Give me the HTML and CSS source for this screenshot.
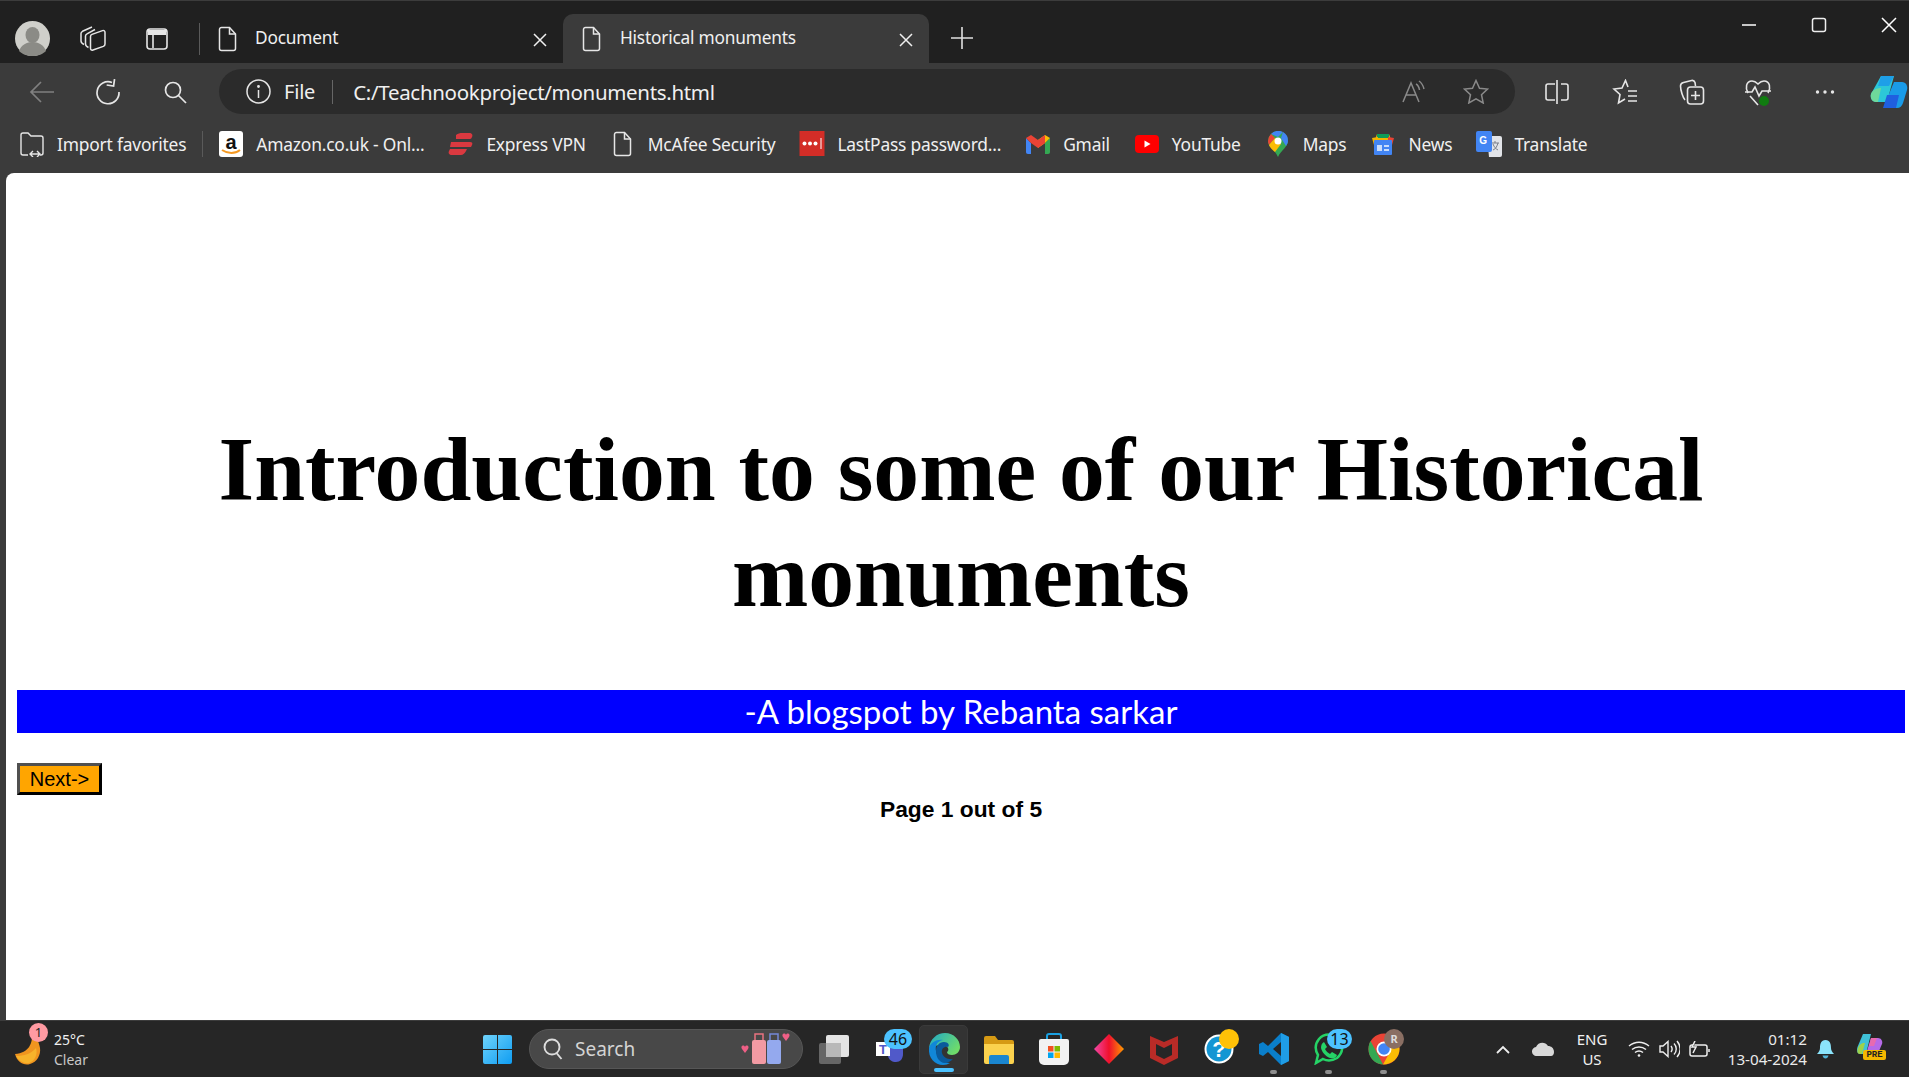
FILE: index.html
```html
<!DOCTYPE html>
<html lang="en">
<head>
  <meta charset="UTF-8" />
  <title>Historical monuments</title>
  <link rel="stylesheet" href="styles.css">
</head>
<body>
  <div class="titlebar">
    <svg class="avatar" width="35" height="35" viewBox="0 0 35 35"><circle cx="17.5" cy="17.5" r="17.5" fill="#cfcfca"/><ellipse cx="17.5" cy="14" rx="7" ry="8" fill="#8b8b86"/><path d="M4 30c2-6 8-9 13.500-9S29 24 31 30c-3 3-8 5-13.500 5S7 33 4 30z" fill="#8b8b86"/></svg>
    <svg class="ic ic-collections" width="26" height="26" viewBox="0 0 26 26" fill="none" stroke="#e6e6e6" stroke-width="1.500"><path d="M4 18.500C2 17.500 1 16.500 1 15V7.500c0-1 .5-1.700 1.500-2.200L12 1"/><path d="M8.500 21.500C6.500 20.500 5.500 19.500 5.500 18V10c0-1 .5-1.700 1.500-2.200L15 3.500"/><path d="M10.500 10.500c0-1 .5-1.700 1.500-2.100l10.500-3.800c1.500-.5 2.500.3 2.500 1.800v11.500c0 1.200-.5 2-1.700 2.500L13 24c-1.500.5-2.500-.3-2.500-1.800z"/></svg>
    <svg class="ic ic-vtabs" width="24" height="24" viewBox="0 0 24 24" fill="none" stroke="#e6e6e6" stroke-width="1.600"><rect x="2" y="2" width="20" height="20" rx="3"/><path d="M3 5.500h18" stroke-width="5"/><path d="M8 7v14"/></svg>
    <span class="tb-sep"></span>
    <div class="tab">
      <svg class="doc" width="20" height="26" viewBox="0 0 20 26" fill="none" stroke="#e6e6e6" stroke-width="1.500"><path d="M3.500 1.500h8l6 6.500v14.500a2 2 0 0 1-2 2h-12a2 2 0 0 1-2-2v-19a2 2 0 0 1 2-2z"/><path d="M11.500 1.500V8h6"/></svg>
      <span class="tab-title">Document</span>
      <svg class="tab-x" width="14" height="14" viewBox="0 0 14 14" stroke="#f0f0f0" stroke-width="1.500"><path d="M1 1l12 12M13 1L1 13"/></svg>
    </div>
    <div class="tab tab-active">
      <svg class="doc" width="20" height="26" viewBox="0 0 20 26" fill="none" stroke="#e6e6e6" stroke-width="1.500"><path d="M3.500 1.500h8l6 6.500v14.500a2 2 0 0 1-2 2h-12a2 2 0 0 1-2-2v-19a2 2 0 0 1 2-2z"/><path d="M11.500 1.500V8h6"/></svg>
      <span class="tab-title">Historical monuments</span>
      <svg class="tab-x" width="14" height="14" viewBox="0 0 14 14" stroke="#f0f0f0" stroke-width="1.500"><path d="M1 1l12 12M13 1L1 13"/></svg>
    </div>
    <svg class="tab-plus" width="22" height="22" viewBox="0 0 22 22" stroke="#e0e0e0" stroke-width="1.600"><path d="M11 0v22M0 11h22"/></svg>
    <div class="win-controls">
      <svg width="16" height="16" viewBox="0 0 16 16" stroke="#fff" stroke-width="1.500"><path d="M1 8h14"/></svg>
      <svg width="16" height="16" viewBox="0 0 16 16" fill="none" stroke="#eee" stroke-width="1.500"><rect x="1.500" y="1.500" width="13" height="13" rx="2"/></svg>
      <svg width="16" height="16" viewBox="0 0 16 16" stroke="#fff" stroke-width="1.500"><path d="M1 1l14 14M15 1L1 15"/></svg>
    </div>
  </div>

  <div class="toolbar">
    <svg class="ic-back" width="26" height="24" viewBox="0 0 26 24" fill="none" stroke="#808080" stroke-width="1.700"><path d="M25 12H2M12 2L2 12l10 10"/></svg>
    <svg class="ic-reload" width="26" height="26" viewBox="0 0 26 26" fill="none" stroke="#e6e6e6" stroke-width="1.700"><path d="M17 3.500A11 11 0 1 0 24 13"/><path d="M19 0v7h-7" transform="rotate(8 19 4)"/></svg>
    <svg class="ic-search" width="24" height="24" viewBox="0 0 24 24" fill="none" stroke="#e6e6e6" stroke-width="1.700"><circle cx="10" cy="10" r="7.500"/><path d="M15.500 15.500L23 23"/></svg>
    <div class="address">
      <svg class="ic-info" width="25" height="25" viewBox="0 0 25 25" fill="none" stroke="#e6e6e6" stroke-width="1.500"><circle cx="12.500" cy="12.500" r="11.500"/><path d="M12.500 11v8"/><circle cx="12.500" cy="7.500" r=".7"/></svg>
      <span class="addr-file">File</span>
      <span class="addr-sep"></span>
      <span class="addr-url">C:/Teachnookproject/monuments.html</span>
      <svg class="ic-read" width="26" height="24" viewBox="0 0 26 24" fill="none" stroke="#8a8a8a" stroke-width="1.500"><path d="M1 22L9 3l8 19M4 15h10"/><path d="M14 4c2 1 3 3 3.500 6M17 1c3 2 4 4 5 8"/></svg>
      <svg class="ic-star" width="26" height="25" viewBox="0 0 26 25" fill="none" stroke="#8a8a8a" stroke-width="1.500"><path d="M13 1.500l3.500 7.700 8 .9-6 5.600 1.700 8.300L13 19.800 5.800 24l1.700-8.300-6-5.600 8-.9z"/></svg>
    </div>
    <svg class="ic-split" width="24" height="26" viewBox="0 0 24 26" fill="none" stroke="#e6e6e6" stroke-width="1.600"><path d="M10 5H3a2 2 0 0 0-2 2v12a2 2 0 0 0 2 2h7M16 5h5a2 2 0 0 1 2 2v12a2 2 0 0 1-2 2h-5M12 1v24"/></svg>
    <svg class="ic-fav" width="26" height="26" viewBox="0 0 26 26" fill="none" stroke="#e6e6e6" stroke-width="1.600"><path d="M16 8l-2.500-6.500L10 9l-8 1 6 5.500L6.500 24l6.500-4"/><path d="M16 12h9M16 17h9M16 22h9"/></svg>
    <svg class="ic-coll" width="26" height="28" viewBox="0 0 26 28" fill="none" stroke="#e6e6e6" stroke-width="1.600"><path d="M6 22C4 20 1.500 12 1.500 8c0-2 1-3 3-3.500l8-2c1.500-.3 3 .5 3.500 2L16.500 8"/><rect x="8.500" y="9" width="16" height="17" rx="3"/><path d="M16.500 13v9M12 17.500h9"/></svg>
    <svg class="ic-health" width="28" height="28" viewBox="0 0 28 28" fill="none"><path d="M4 15C1 10 2 3 8 3c3 0 5 2 6 3 1-1 3-3 6-3 6 0 7 7 4 12" stroke="#e6e6e6" stroke-width="1.600"/><path d="M1 14h7l3-5 4 9 3-5h9M6 18l8 9" stroke="#e6e6e6" stroke-width="1.600"/><circle cx="20" cy="23" r="5" fill="#107c10"/></svg>
    <svg class="ic-more" width="20" height="6" viewBox="0 0 20 6" fill="#e6e6e6"><circle cx="2.500" cy="3" r="1.700"/><circle cx="10" cy="3" r="1.700"/><circle cx="17.500" cy="3" r="1.700"/></svg>
    <svg class="ic-copilot" width="38" height="34" viewBox="0 0 38 34"><path d="M11 1h13l-7 26H6C2 27 0 23 1 19z" fill="#2cc7d8"/><path d="M11 1h13l-5 10H8z" fill="#1e9fe8"/><path d="M1 19c1-4 6-6 10-6l-3 14H6c-4 0-6-4-5-8z" fill="#6fd89a"/><path d="M24 7h8c4 0 6 4 5 8l-4 13c-1 3-3 5-6 5H14l5-14z" fill="#1a9be8"/><path d="M17 20h12l-3 13H13z" fill="#1f5fe0"/></svg>
  </div>

  <div class="bookmarks">
    <div class="bm bm-import">
      <svg class="bm-ic" width="26" height="26" viewBox="0 0 26 26" fill="none" stroke="#e6e6e6" stroke-width="1.400"><path d="M9 24H4a2 2 0 0 1-2-2V4a2 2 0 0 1 2-2h5l3 3h10a2 2 0 0 1 2 2v15a2 2 0 0 1-2 2h-1"/><path d="M11 23h10M14 20l-3 3 3 3M18 20l3 3-3 3"/></svg>
      <span>Import favorites</span>
    </div>
    <span class="bm-sep"></span>
    <div class="bm">
      <svg class="bm-ic" width="24" height="26" viewBox="0 0 24 26"><rect width="24" height="26" rx="3" fill="#fff"/><text class="amz" x="12" y="18" text-anchor="middle">a</text><path d="M3 19c6 4 13 4 18 0" fill="none" stroke="#f59a23" stroke-width="2"/></svg>
      <span>Amazon.co.uk - Onl...</span>
    </div>
    <div class="bm">
      <svg class="bm-ic" width="24" height="22" viewBox="0 0 24 22" fill="#da3940"><path d="M7 2C9 .5 11 0 13 0h7c3 0 4 2 3 4-.5 1-1 2-2 2H7z"/><path d="M2 9h19c2 0 3 1 2 3l-1 2H1z"/><path d="M1 16h17l-1 2c-1 2-3 4-5 4H3c-3 0-4-2-3-4z"/></svg>
      <span>Express VPN</span>
    </div>
    <div class="bm">
      <svg class="bm-ic" width="20" height="26" viewBox="0 0 20 26" fill="none" stroke="#e6e6e6" stroke-width="1.500"><path d="M3.500 1.500h8l6 6.500v14.500a2 2 0 0 1-2 2h-12a2 2 0 0 1-2-2v-19a2 2 0 0 1 2-2z"/><path d="M11.500 1.500V8h6"/></svg>
      <span>McAfee Security</span>
    </div>
    <div class="bm">
      <svg class="bm-ic" width="25" height="25" viewBox="0 0 25 25"><rect width="25" height="25" fill="#d32d27"/><g fill="#fff"><circle cx="5" cy="12.500" r="2"/><circle cx="10.500" cy="12.500" r="2"/><circle cx="16" cy="12.500" r="2"/><rect x="21" y="7" width="1" height="11"/></g></svg>
      <span>LastPass password...</span>
    </div>
    <div class="bm">
      <svg class="bm-ic" width="24" height="20" viewBox="0 0 24 20"><path d="M0 4v14c0 1 .6 2 2 2h3V9z" fill="#4285f4"/><path d="M24 4v14c0 1-.6 2-2 2h-3V9z" fill="#34a853"/><path d="M19 1l5 3-5 5-7 5V6z" fill="#fbbc04"/><path d="M0 4l5-3 7 5v8L5 9z" fill="#ea4335"/><path d="M12 6l7-5v8l-7 5z" fill="#ea4335"/></svg>
      <span>Gmail</span>
    </div>
    <div class="bm">
      <svg class="bm-ic" width="24" height="18" viewBox="0 0 24 18"><rect width="24" height="18" rx="4" fill="#f00"/><path d="M9.500 5.500v7l6-3.500z" fill="#fff"/></svg>
      <span>YouTube</span>
    </div>
    <div class="bm">
      <svg class="bm-ic" width="20" height="26" viewBox="0 0 20 26"><path d="M10 0a10 10 0 0 1 10 10c0 6-7 9-10 16-3-7-10-10-10-16A10 10 0 0 1 10 0z" fill="#34a853"/><path d="M3 3a10 10 0 0 1 12-2L10 6z" fill="#4285f4"/><path d="M0 10a10 10 0 0 1 3-7l4 4-6 7a10 10 0 0 1-1-4z" fill="#ea4335"/><path d="M15 1a10 10 0 0 1 5 9c0 2-1 3-2 5l-5-8z" fill="#4285f4"/><path d="M1 14l6-7 6 6-6 8C5 19 2 17 1 14z" fill="#fbbc04"/><circle cx="10" cy="10" r="3.500" fill="#fff"/></svg>
      <span>Maps</span>
    </div>
    <div class="bm">
      <svg class="bm-ic" width="24" height="24" viewBox="0 0 24 24"><path d="M6 2h12l2 6H4z" fill="#f4b400"/><path d="M6 2h12v4H6z" fill="#0f9d58"/><path d="M1 6l6-1v8H3z" fill="#f4b400"/><path d="M23 6l-6-1v8h4z" fill="#ea4335"/><rect x="3" y="8" width="18" height="15" rx="1" fill="#4285f4"/><path d="M6 13h5v6H6zM13 13h5v2h-5zM13 17h5v2h-5z" fill="#c9ddfb"/></svg>
      <span>News</span>
    </div>
    <div class="bm">
      <svg class="bm-ic" width="26" height="26" viewBox="0 0 26 26"><path d="M11 5h13a2 2 0 0 1 2 2v17a2 2 0 0 1-2 2H13z" fill="#e2e4e8"/><rect width="16" height="21" rx="2" fill="#4285f4"/><text class="tr-g" x="7" y="13" text-anchor="middle">G</text><path d="M16 12h7M19 10v2M17 19c3-1 4-4 5-7M17 13c1 3 3 5 5 6" stroke="#7a7f88" fill="none"/></svg>
      <span>Translate</span>
    </div>
  </div>

  <div class="page">
    <h1 class="intro-title">Introduction to some of our Historical monuments</h1>
    <h2 class="blog-tag">-A blogspot by Rebanta sarkar</h2>
    <button class="next-btn">Next-&gt;</button>
    <p class="page-count">Page 1 out of 5</p>
  </div>

  <div class="taskbar">
    <div class="weather">
      <svg class="moon" width="30" height="40" viewBox="0 0 30 40"><path d="M18 4c1 10-3 20-17 21 2 8 9 12 15 10 7-2 11-9 10-16-1-6-4-12-8-15z" fill="#f0951f"/><path d="M2 27c8 0 15-2 20-8 2 6-1 13-7 15-5 1-10-2-13-7z" fill="#f7b32b"/></svg>
      <span class="weather-badge">1</span>
      <div class="weather-text"><span>25°C</span><span>Clear</span></div>
    </div>
    <svg class="winlogo" width="29" height="29" viewBox="0 0 29 29"><defs><linearGradient id="wg" x1="0" y1="0" x2="1" y2="1"><stop offset="0" stop-color="#6fd3fb"/><stop offset="1" stop-color="#0f9df2"/></linearGradient></defs><path d="M0 2a2 2 0 0 1 2-2h12v14H0zM15 0h12a2 2 0 0 1 2 2v12H15zM0 15h14v14H2a2 2 0 0 1-2-2zM15 15h14v12a2 2 0 0 1-2 2H15z" fill="url(#wg)"/></svg>
    <div class="searchbox">
      <svg width="20" height="22" viewBox="0 0 20 22" fill="none" stroke="#ddd" stroke-width="1.900"><circle cx="9" cy="9" r="7.500"/><path d="M13.500 15l5 6"/></svg>
      <span class="search-label">Search</span>
      <svg class="luggage" width="52" height="36" viewBox="0 0 52 36"><path d="M2 18c-2-3 2-5 3-2 1-3 5-1 3 2l-3 4z" fill="#ef5f86"/><rect x="12" y="9" width="14" height="24" rx="2" fill="#f29aa3"/><path d="M15 9V3h8v6" fill="none" stroke="#e8727f" stroke-width="1.500"/><rect x="27" y="9" width="14" height="24" rx="2" fill="#94a9ee"/><path d="M30 9V3h8v6" fill="none" stroke="#7488d8" stroke-width="1.500"/><path d="M43 6c-2-3 2-5 3-2 1-3 5-1 3 2l-3 4z" fill="#ef5f86"/></svg>
    </div>
    <div class="apps">
      <div class="app"><svg width="30" height="30" viewBox="0 0 30 30"><rect y="9" width="22" height="21" rx="2" fill="#666"/><rect x="7" y="1" width="23" height="22" rx="2" fill="#e4e4e4"/><rect x="7" y="9" width="15" height="14" fill="#b8b8b8"/></svg></div>
      <div class="app">
        <svg width="30" height="30" viewBox="0 0 30 30"><path d="M12 14h17v6c0 5-3 8-7 8s-7-2-8-6z" fill="#5059c9"/><rect x="2" y="8" width="14" height="14" fill="#fff"/><text class="teams-t" x="9" y="20" text-anchor="middle">T</text></svg>
        <span class="badge badge-teams">46</span>
      </div>
      <div class="app app-active">
        <svg width="32" height="32" viewBox="0 0 32 32"><defs><linearGradient id="eg" x1="0" y1="0" x2="1" y2=".6"><stop offset="0" stop-color="#1fa8c9"/><stop offset="1" stop-color="#6fdc6a"/></linearGradient></defs><path d="M1 15C2 6 9 0 17 0c9 0 15 7 15 14 0 5-4 8-8 8-3 0-5-1-5-3 3-2 1-7-5-7-7 0-13 3-13 3z" fill="url(#eg)"/><path d="M1 15C3 9 9 6 15 7c-6 1-8 6-7 11 1 6 6 12 14 12-2 1-4 2-7 2C7 32 0 25 1 15z" fill="#1187d8"/><path d="M8 18c0-5 3-9 8-9 4 0 6 3 4 5-3-1-7 1-6 6 1 4 6 7 11 6-2 2-5 4-9 4-5-1-8-6-8-12z" fill="#0a5a9c"/></svg>
        <span class="app-pill"></span>
      </div>
      <div class="app"><svg width="30" height="30" viewBox="0 0 30 30"><path d="M0 4a2 2 0 0 1 2-2h9l3 4h14a2 2 0 0 1 2 2v4H0z" fill="#d69a14"/><path d="M0 10h30v18a2 2 0 0 1-2 2H2a2 2 0 0 1-2-2z" fill="#fbd24e"/><path d="M5 30v-7a2 2 0 0 1 2-2h16a2 2 0 0 1 2 2v7z" fill="#1a86d0"/></svg></div>
      <div class="app"><svg width="30" height="32" viewBox="0 0 30 32"><path d="M8 8V3a2 2 0 0 1 2-2h10a2 2 0 0 1 2 2v5" fill="none" stroke="#1ba1e2" stroke-width="2"/><path d="M0 8a2 2 0 0 1 2-2h26a2 2 0 0 1 2 2v19a5 5 0 0 1-5 5H5a5 5 0 0 1-5-5z" fill="#f2f2f2"/><rect x="9" y="13" width="5.500" height="5.500" fill="#f25022"/><rect x="15.500" y="13" width="5.500" height="5.500" fill="#7fba00"/><rect x="9" y="19.500" width="5.500" height="5.500" fill="#00a4ef"/><rect x="15.500" y="19.500" width="5.500" height="5.500" fill="#ffb900"/></svg></div>
      <div class="app"><svg width="30" height="30" viewBox="0 0 30 30"><defs><linearGradient id="dg" x1="0" y1="0" x2="1" y2="0"><stop offset="0" stop-color="#f048a8"/><stop offset=".5" stop-color="#f0102c"/><stop offset="1" stop-color="#ff9a00"/></linearGradient></defs><path d="M15 0l15 15-15 15L0 15z" fill="url(#dg)"/></svg></div>
      <div class="app"><svg width="28" height="32" viewBox="0 0 28 32"><path d="M0 3l14 6 14-6v22l-14 7-14-7z" fill="#b92b27"/><path d="M6 11l8 4 8-4v11l-8 4-8-4z" fill="#262626"/></svg></div>
      <div class="app">
        <svg width="30" height="32" viewBox="0 0 30 32"><circle cx="15" cy="16" r="14.500" fill="#fff"/><circle cx="15" cy="16" r="12.500" fill="#1496d3"/><text class="help-q" x="15" y="24" text-anchor="middle">?</text></svg>
        <span class="badge badge-dot"></span>
      </div>
      <div class="app app-open">
        <svg width="30" height="32" viewBox="0 0 30 32"><path d="M22 0l8 4v24l-8 4-13-13-5 4-4-2V11l4-2 5 4zM22 9l-8 7 8 7z" fill="#0a7fcb"/><path d="M22 0l8 4v24l-8 4z" fill="#1f9de6"/></svg>
        <span class="app-dot"></span>
      </div>
      <div class="app app-open">
        <svg width="32" height="32" viewBox="0 0 30 32" fill="none"><path d="M2 30l2-8C1 17 1 11 5 6c5-6 15-6 20 0 5 6 4 14-2 19-5 3-10 3-14 1z" stroke="#25d366" stroke-width="2.500"/><path d="M10 9l3 5-2 2c1 2 3 4 5 5l2-2 5 3c-1 3-4 4-7 3-5-2-8-6-9-10 0-3 1-5 3-6z" fill="#25d366"/></svg>
        <span class="badge badge-wa">13</span>
        <span class="app-dot"></span>
      </div>
      <div class="app app-open">
        <svg width="32" height="32" viewBox="0 0 32 32"><circle cx="16" cy="16" r="15.500" fill="#ea4335"/><path d="M2.500 8L9 20l6 11.500C6 31 .5 24 .5 16c0-3 .8-5.800 2-8z" fill="#34a853"/><path d="M16 10h14c1 2 1.500 4 1.500 6C31.500 25 24 31.500 15 31.500L23 17z" fill="#fbbc04"/><circle cx="16" cy="16" r="7.500" fill="#fff"/><circle cx="16" cy="16" r="5.800" fill="#4285f4"/></svg>
        <span class="badge badge-chrome">R</span>
        <span class="app-dot"></span>
      </div>
    </div>
    <div class="tray">
      <svg class="tr-chevron" width="14" height="9" viewBox="0 0 14 9" fill="none" stroke="#eee" stroke-width="1.800"><path d="M1 8l6-6 6 6"/></svg>
      <svg class="tr-cloud" width="22" height="14" viewBox="0 0 22 14"><path d="M5 14a4.500 4.500 0 0 1-1-9c2-5 9-6 12-1 3 0 6 2 6 6 0 2-1 4-3 4z" fill="#d8d8d8"/></svg>
      <div class="tr-lang"><span>ENG</span><span>US</span></div>
      <svg class="tr-wifi" width="22" height="16" viewBox="0 0 22 16" fill="none" stroke="#eee" stroke-width="1.500"><path d="M1 5c6-5 14-5 20 0M4 8.500c4-3.500 10-3.500 14 0M7 11.500c2.500-2 5.500-2 8 0"/><circle cx="11" cy="14.500" r="1.300" fill="#eee" stroke="none"/></svg>
      <svg class="tr-sound" width="21" height="18" viewBox="0 0 21 18" fill="none" stroke="#eee" stroke-width="1.400"><path d="M1 6h3l5-4.500v15L4 12H1z"/><path d="M12 6c1.500 2 1.500 4 0 6M15 3.500c3 3 3 8 0 11M18 1c4 5 4 11 0 16"/></svg>
      <svg class="tr-batt" width="21" height="16" viewBox="0 0 21 16" fill="none" stroke="#eee" stroke-width="1.500"><rect x="1" y="4" width="17" height="11" rx="2"/><path d="M20 8v3"/><path d="M6 0L3 6h4l-3 6" fill="#262626"/></svg>
      <div class="clock"><span>01:12</span><span>13-04-2024</span></div>
      <svg class="tr-bell" width="17" height="19" viewBox="0 0 17 19"><path d="M8.500 0C4 0 3 4 3 8c0 2-1 4-3 6h17c-2-2-3-4-3-6 0-4-1-8-5.500-8z" fill="#8be4fb"/><path d="M5.500 15.500h6c-.5 2-1.500 3-3 3s-2.500-1-3-3z" fill="#52b5d8"/></svg>
      <div class="copilot-pre">
        <svg width="26" height="20" viewBox="0 0 26 20"><path d="M6 0h8l-5 20H3C0 20-.5 16 .5 13z" fill="#3fc1d8"/><path d="M1 14c1-3 3-5 7-5l-3 11H3C0 20 0 17 1 14z" fill="#9ed24a"/><path d="M14 4h7c3 0 5 3 4 6l-3 7c-1 2-2 3-4 3h-9z" fill="#b66ae8"/><path d="M14 4h6l-3 8h-5z" fill="#e86ab0"/></svg>
        <span class="pre-tag">PRE</span>
      </div>
    </div>
  </div>
</body>
</html>
```

FILE: styles.css
```css
html, body {
  margin: 0;
  padding: 0;
  height: 100%;
}

body {
  background: #3b3b3b;
  display: flex;
  flex-direction: column;
  height: 1077px;
  overflow: hidden;
  font-family: 'Noto Sans', sans-serif;
  color: #f0f0f0;
}

svg {
  flex: none;
  display: block;
}

/* title bar */
.titlebar {
  height: 62px;
  flex: none;
  background: #202020;
  border-top: 1px solid #3c3c3c;
  display: flex;
  align-items: center;
  padding-left: 15px;
  box-sizing: content-box;
}

.avatar { margin-top: 13px; margin-right: 30px; }
.ic-collections { margin-top: 13px; margin-right: 39px; }
.ic-vtabs { margin-top: 13px; margin-right: 30px; }

.tb-sep {
  width: 1px;
  height: 32px;
  margin-top: 13px;
  background: #5a5a5a;
  margin-right: 12px;
}

.tab {
  width: 351px;
  height: 49px;
  align-self: flex-end;
  display: flex;
  align-items: center;
  padding-left: 6px;
  box-sizing: border-box;
  position: relative;
}

.tab-active {
  width: 366px;
  padding-left: 19px;
  background: #3b3b3b;
  border-radius: 10px 10px 0 0;
}

.tab-title {
  font-size: 17.300px;
  margin-left: 17px;
  margin-bottom: 2px;
  flex: 1;
  letter-spacing: -0.2px;
}

.tab-active .tab-title {
  margin-left: 18px;
}

.tab-x { margin-right: 16px; margin-top: 2px; }

.tab-plus { margin-left: 22px; margin-top: 11px; }

.win-controls {
  margin-left: auto;
  display: flex;
  gap: 54px;
  padding-right: 12px;
  margin-bottom: 14px;
}

/* address row */
.toolbar {
  height: 51px;
  flex: none;
  display: flex;
  align-items: center;
  padding-left: 29px;
  box-sizing: border-box;
  padding-top: 6px;
}

.ic-back { margin-right: 40px; }
.ic-reload { margin-right: 42px; }
.ic-search { margin-right: 32px; }

.address {
  width: 1296px;
  height: 45px;
  background: #2b2b2b;
  border-radius: 23px;
  display: flex;
  align-items: center;
  padding-left: 27px;
  box-sizing: border-box;
  flex: none;
}

.addr-file {
  font-size: 20px;
  margin-left: 13px;
  letter-spacing: -0.2px;
}

.addr-sep {
  width: 1px;
  height: 24px;
  background: #666;
  margin-left: 17px;
}

.addr-url {
  font-size: 20.500px;
  margin-left: 20px;
  letter-spacing: -0.32px;
}

.ic-read { margin-left: auto; margin-right: 35px; }
.ic-star { margin-right: 26px; }

.ic-split { margin-left: 30px; margin-right: 43px; }
.ic-fav { margin-right: 41px; }
.ic-coll { margin-right: 39px; }
.ic-health { margin-right: 43px; }
.ic-more { margin-right: 35px; }
.ic-copilot { margin-right: -20px; }

/* favourites row */
.bookmarks {
  height: 59px;
  flex: none;
  display: flex;
  align-items: center;
  padding-left: 19px;
  box-sizing: border-box;
  font-size: 17.400px;
  letter-spacing: -0.2px;
}

.bm {
  display: flex;
  align-items: center;
  margin-right: 24px;
  white-space: nowrap;
}

.bm-import { margin-right: 16px; }

.bm-ic { width: 26px; margin-right: 12px; }

.bm-sep {
  width: 1px;
  height: 26px;
  background: #5a5a5a;
  margin-right: 15px;
}

.amz {
  font: bold 20px 'Liberation Sans', sans-serif;
  fill: #111;
}

.tr-g {
  font: bold 10px 'Liberation Sans', sans-serif;
  fill: #fff;
}

/* the page itself */
.page {
  flex: 1;
  margin-left: 6px;
  background: #fff;
  border-radius: 8px 0 0 0;
  color: #000;
  padding: 0 4px 0 11px;
  box-sizing: border-box;
  display: flex;
  flex-direction: column;
  align-items: flex-start;
}

.intro-title {
  width: 100%;
  margin: 243px 0 0;
  font-family: 'Liberation Serif', serif;
  font-size: 91.600px;
  line-height: 106px;
  font-weight: bold;
  text-align: center;
}

.blog-tag {
  width: 100%;
  height: 43px;
  margin: 62px 0 0;
  background: #00f;
  color: #fff;
  font-family: 'Comic Sans MS', 'Lato', sans-serif;
  font-size: 33px;
  font-weight: normal;
  line-height: 43px;
  text-align: center;
}

.next-btn {
  width: 85px;
  height: 32px;
  margin-top: 30px;
  padding: 0;
  background: orange;
  border: 3px solid #000;
  border-top-color: #505050;
  border-left-color: #505050;
  font-family: 'Liberation Sans', sans-serif;
  font-size: 20px;
  color: #000;
}

.page-count {
  width: 100%;
  margin: 1px 0 0;
  font-family: 'Liberation Sans', sans-serif;
  font-size: 22.800px;
  font-weight: bold;
  text-align: center;
}

/* windows taskbar */
.taskbar {
  height: 57px;
  flex: none;
  background: #262626;
  border-top: 1px solid #3c3c3c;
  box-sizing: border-box;
  display: flex;
  align-items: center;
  position: relative;
}

.weather {
  width: 483px;
  flex: none;
  display: flex;
  align-items: center;
  padding-left: 14px;
  box-sizing: border-box;
  position: relative;
}

.weather-badge {
  position: absolute;
  left: 29px;
  top: -5px;
  width: 19px;
  height: 19px;
  border-radius: 50%;
  background: #ff9aa2;
  color: #222;
  font-size: 13px;
  line-height: 19px;
  text-align: center;
}

.weather-text {
  display: flex;
  flex-direction: column;
  font-size: 14px;
  line-height: 20px;
  margin-left: 10px;
  margin-top: 2px;
}

.weather-text span:last-child { color: #c8c8c8; }

.winlogo { margin-right: 17px; }

.searchbox {
  width: 274px;
  height: 40px;
  flex: none;
  background: #484848;
  border: 1px solid #565656;
  border-radius: 20px;
  box-sizing: border-box;
  display: flex;
  align-items: center;
  padding-left: 13px;
  position: relative;
}

.search-label {
  font-size: 19px;
  color: #d4d4d4;
  margin-left: 12px;
}

.luggage { margin-left: auto; margin-right: 10px; }

.apps {
  display: flex;
  margin-left: 3px;
}

.app {
  width: 55px;
  height: 49px;
  display: flex;
  align-items: center;
  justify-content: center;
  position: relative;
}

.app-active {
  width: 49px;
  margin: 0 3px;
  background: #333;
  border: 1px solid #3a3a3a;
  border-radius: 5px;
  box-sizing: border-box;
}

.app-pill {
  position: absolute;
  bottom: 1px;
  left: 14px;
  width: 20px;
  height: 4px;
  border-radius: 2px;
  background: #4cc2ff;
}

.app-dot {
  position: absolute;
  bottom: 0;
  left: 24px;
  width: 7px;
  height: 4px;
  border-radius: 2px;
  background: #8e8e8e;
}

.badge {
  position: absolute;
  top: 4px;
  left: 26px;
  min-width: 25px;
  height: 20px;
  border-radius: 10px;
  background: #4cc2ff;
  color: #111;
  font-size: 16px;
  line-height: 20px;
  text-align: center;
}

.badge-teams {
  left: 23px;
  min-width: 28px;
}

.badge-dot {
  left: 28px;
  min-width: 20px;
  background: #ffc107;
}

.badge-chrome {
  left: 28px;
  min-width: 20px;
  background: #8a6f63;
  color: #ddd;
  font-size: 11px;
  font-weight: bold;
}

.teams-t {
  font: bold 13px 'Liberation Sans', sans-serif;
  fill: #5059c9;
}

.help-q {
  font: bold 22px 'Liberation Sans', sans-serif;
  fill: #fff;
}

.tray {
  display: flex;
  align-items: center;
  flex: 1;
}

.tr-chevron { margin-left: 85px; }
.tr-cloud { margin-left: 22px; }

.tr-lang {
  display: flex;
  flex-direction: column;
  align-items: center;
  font-size: 15px;
  line-height: 20px;
  width: 40px;
  margin-left: 18px;
}

.tr-wifi { margin-left: 16px; }
.tr-sound { margin-left: 9px; }
.tr-batt { margin-left: 9px; }

.clock {
  display: flex;
  flex-direction: column;
  align-items: flex-end;
  font-size: 15.200px;
  line-height: 20px;
  width: 91px;
  margin-left: 6px;
  color: #eaeaea;
}

.tr-bell { margin-left: 10px; }

.copilot-pre {
  margin-left: 23px;
  position: relative;
  width: 30px;
  height: 28px;
  margin-top: -2px;
}

.pre-tag {
  position: absolute;
  left: 6px;
  top: 16px;
  width: 23px;
  height: 10px;
  background: #f5b800;
  border-radius: 2px;
  color: #222;
  font: bold 9px/10px 'Liberation Mono', monospace;
  text-align: center;
}
```
